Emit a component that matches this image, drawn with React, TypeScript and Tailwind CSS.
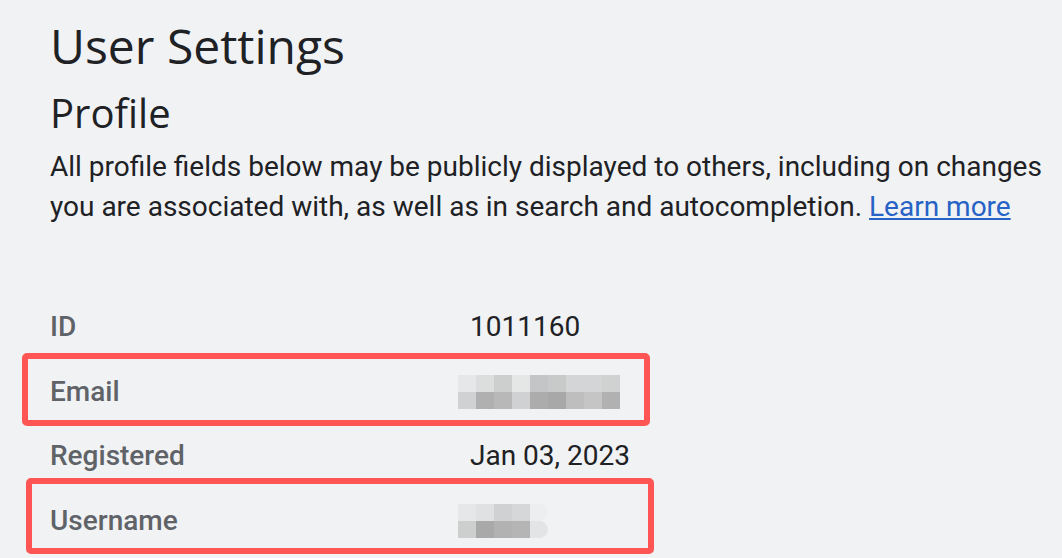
const emailBlur = [
  ["#e6e7e8", "#dcdddd", "#cdcfcf", "#e5e7e6", "#c4c5c6", "#c8c9c9", "#d4d5d6", "#d4d5d6", "#d0d1d1"],
  ["#d0d1d2", "#b0b0b0", "#b8b8b8", "#d0d1d2", "#acacac", "#a8a8a8", "#bebebe", "#c5c5c6", "#b1b1b1"],
];

const usernameBlur = [
  ["#e6e7e8", "#e0e1e2", "#d0d1d2", "#d6d7d8", "#eceeef"],
  ["#cdcece", "#a9a9a9", "#b2b2b2", "#b5b5b5", "#e3e4e5"],
];

function Blur({ cells }: { cells: string[][] }) {
  return (
    <div className="flex flex-col">
      {cells.map((row, r) => (
        <div key={r} className="flex">
          {row.map((c, i) => (
            <div
              key={i}
              className={`w-[18px] h-[17px] ${i === row.length - 1 && row.length === 5 ? "rounded-r-full" : ""}`}
              style={{ backgroundColor: c }}
            />
          ))}
        </div>
      ))}
    </div>
  );
}

interface Row {
  label: string;
  value?: string;
  blur?: string[][];
  highlight?: "email" | "username";
}

const rows: Row[] = [
  { label: "ID", value: "1011160" },
  { label: "Email", blur: emailBlur, highlight: "email" },
  { label: "Registered", value: "Jan 03, 2023" },
  { label: "Username", blur: usernameBlur, highlight: "username" },
];

export default function App() {
  return (
    <div className="w-[1062px] h-[558px] overflow-hidden bg-[#f1f2f4] pl-[50px] pt-[16px]">
      <h1 className="font-['Open_Sans',sans-serif] text-[48px] leading-[60px] text-[#202124]">User Settings</h1>
      <h2 className="font-['Open_Sans',sans-serif] text-[40px] leading-[50px] text-[#202124] mt-[12px]">Profile</h2>
      <p className="font-['Roboto',sans-serif] text-[28px] leading-[40px] text-[#202124] mt-[9px] w-[1005px]">
        All profile fields below may be publicly displayed to others, including on changes you are associated with, as well as in search and autocompletion.{" "}
        <a href="#" className="text-[#2762c6] underline">Learn more</a>
      </p>
      <div className="mt-[68px] font-['Roboto',sans-serif] text-[28px]">
        {rows.map((row) => (
          <div key={row.label} className="relative flex items-center h-[64.5px]">
            <div className="w-[408px] font-medium text-[#5f6368]">{row.label}</div>
            <div className="text-[#202124]">
              {row.value ? <span className="pl-[12px]">{row.value}</span> : row.blur ? <Blur cells={row.blur} /> : null}
            </div>
            {row.highlight === "email" && (
              <div className="absolute left-[-28px] top-[-7px] w-[628px] h-[73px] border-[6px] border-[#ff5555] rounded-[5px]" />
            )}
            {row.highlight === "username" && (
              <div className="absolute left-[-24px] top-[-11px] w-[628px] h-[76px] border-[6px] border-[#ff5555] rounded-[5px]" />
            )}
          </div>
        ))}
      </div>
    </div>
  );
}
